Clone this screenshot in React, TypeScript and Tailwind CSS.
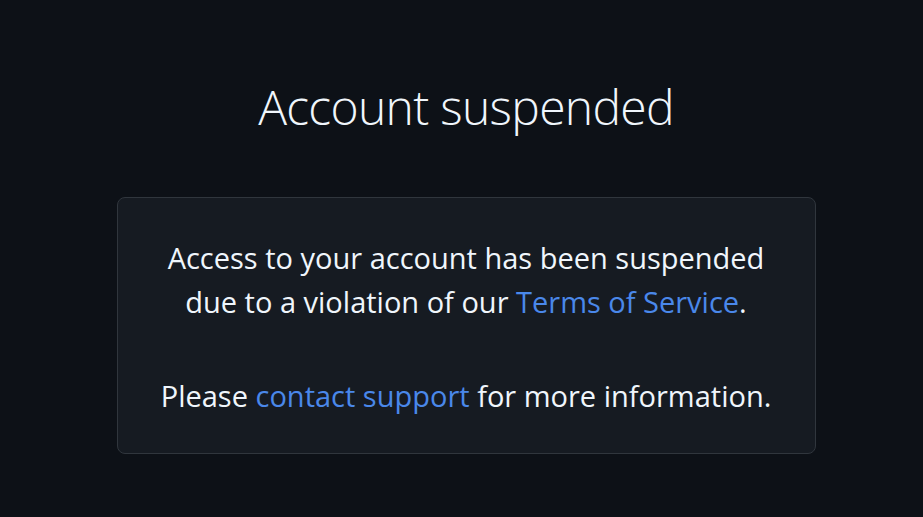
export default function App() {
  return (
    <div
      className="min-h-screen w-full bg-[#0d1117] flex flex-col items-center pl-[9px] text-[#f0f6fc]"
      style={{ fontFamily: '"Open Sans", "Noto Sans", sans-serif' }}
    >
      {/* Heading */}
      <h1 className="mt-[78px] text-[48px] leading-[58px] font-light tracking-[-0.7px] text-[#f0f6fc]">
        Account suspended
      </h1>

      {/* Card */}
      <div className="mt-[61px] w-[699px] rounded-lg border border-[#30363d] bg-[#161b22] px-6 pt-[38px] pb-[35px] text-center text-[29px] leading-[44px]">
        <p>
          Access to your account has been suspended
          <br />
          due to a violation of our{" "}
          <a href="#" className="text-[#4a88ea]">
            Terms of Service
          </a>
          .
        </p>
        <p className="mt-[50px]">
          Please{" "}
          <a href="#" className="text-[#4a88ea]">
            contact support
          </a>{" "}
          for more information.
        </p>
      </div>
    </div>
  );
}
